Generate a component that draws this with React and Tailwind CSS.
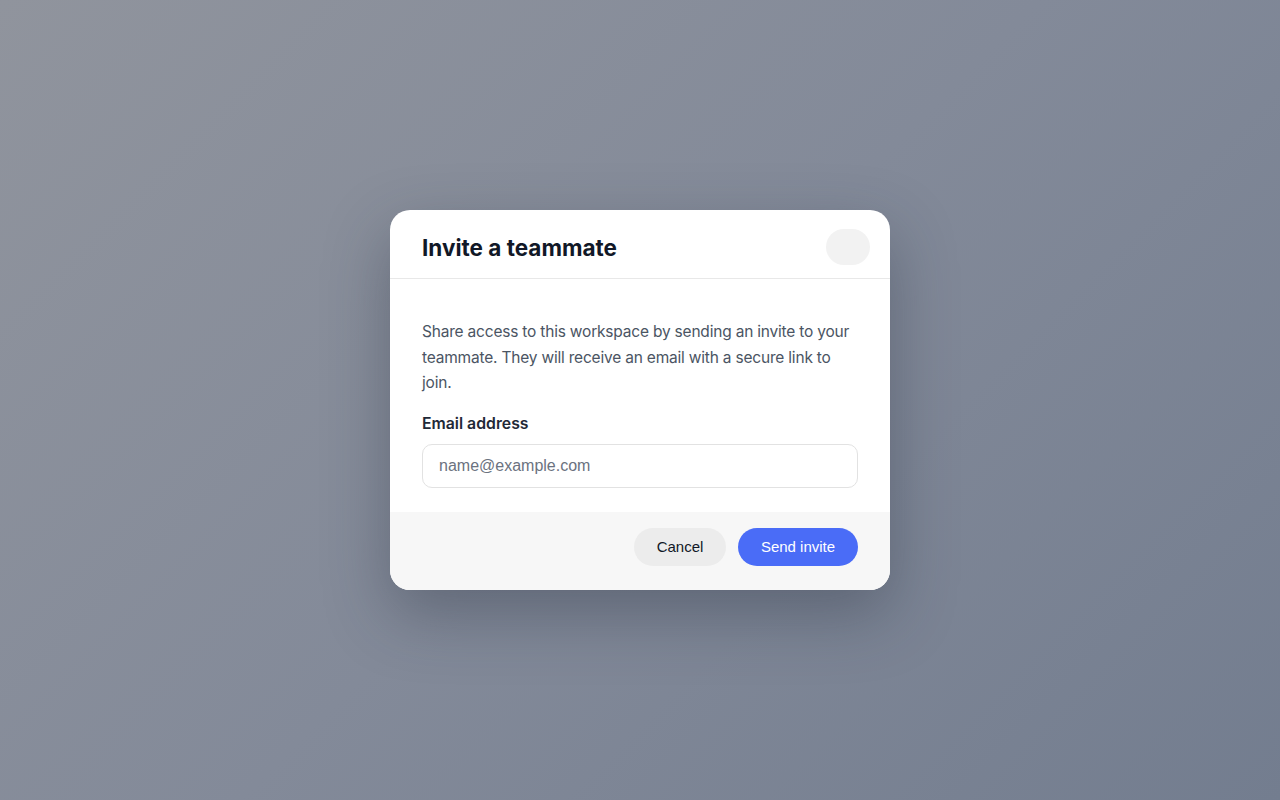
export default function App() {
  return (
    <div className="w-full h-[800px] bg-[linear-gradient(135deg,#90949d_0%,#838a99_50%,#737d8f_100%)] flex items-center justify-center" style={{ fontFamily: "Inter, 'Noto Sans', sans-serif" }}>
      <div className="w-[500px] bg-white rounded-[20px] overflow-hidden shadow-[0_24px_64px_rgba(40,48,64,0.38)]">
        <div className="flex items-center justify-between pl-8 pr-5 pt-[19px] pb-[13px] border-b border-[#e8e8e8]">
          <h2 className="text-[22.5px] font-bold text-[#111827] leading-[28px] translate-y-[1px]">Invite a teammate</h2>
          <button className="w-[44px] h-[36px] rounded-full bg-[#f2f2f2]" aria-label="Close"></button>
        </div>
        <div className="px-8 pt-10 pb-6">
          <p className="text-[15.5px] leading-[25.6px] tracking-[-0.2px] text-[#4b5563]">
            Share access to this workspace by sending an invite to your teammate. They will receive an email with a secure link to join.
          </p>
          <label className="block mt-4 text-[15.8px] leading-[24px] font-semibold text-[#1f2937]">Email address</label>
          <input
            type="email"
            placeholder="name@example.com"
            className="mt-2 w-full h-[44px] px-4 rounded-[10px] border border-[#e2e2e2] text-[16px] text-[#111827] placeholder:text-[#6b7280] outline-none"
            style={{ fontFamily: "'Liberation Sans', Arial, sans-serif" }}
          />
        </div>
        <div className="bg-[#f7f7f7] flex justify-end gap-3 px-8 pt-4 pb-6" style={{ fontFamily: "'Liberation Sans', Arial, sans-serif" }}>
          <button className="h-[38px] w-[92px] rounded-full bg-[#ececec] text-[15px] text-[#111827]">Cancel</button>
          <button className="h-[38px] w-[120px] rounded-full bg-[#4a6cf7] text-[15px] text-white">Send invite</button>
        </div>
      </div>
    </div>
  );
}
